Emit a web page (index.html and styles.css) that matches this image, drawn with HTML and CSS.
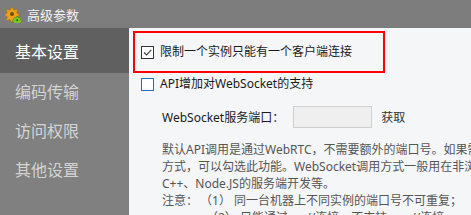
FILE: index.html
```html
<!DOCTYPE html>
<html lang="zh-CN">
<head>
    <meta charset="UTF-8">
    <title>高级参数</title>
    <link rel="stylesheet" href="styles.css">
</head>
<body>
    <div class="window">
        <header class="titlebar">
            <svg class="gear" width="16" height="16" viewBox="0 0 16 16">
                <g fill="#e8a21c" stroke="#b06a08" stroke-width="0.6">
                    <path d="M6 0.8h2l0.4 1.8 1.3 0.6 1.6-1 1.4 1.4-1 1.6 0.6 1.3 1.8 0.4v2l-1.8 0.4-0.6 1.3 1 1.6-1.4 1.4-1.6-1-1.3 0.6-0.4 1.8h-2l-0.4-1.8-1.3-0.6-1.6 1-1.4-1.4 1-1.6-0.6-1.3-1.8-0.4v-2l1.8-0.4 0.6-1.3-1-1.6 1.4-1.4 1.6 1 1.3-0.6z"/>
                </g>
                <circle cx="7" cy="7" r="2" fill="#7a4a06"/>
                <g fill="#7cc62a" stroke="#3f7a10" stroke-width="0.5">
                    <path d="M11.5 9.5h1.4l0.3 1 0.8 0.4 0.9-0.5 1 1-0.5 0.9 0.4 0.8 1 0.3v1.4l-1 0.3-0.4 0.8 0.5 0.9-1 1-0.9-0.5-0.8 0.4-0.3 1h-1.4l-0.3-1-0.8-0.4-0.9 0.5-1-1 0.5-0.9-0.4-0.8-1-0.3v-1.4l1-0.3 0.4-0.8-0.5-0.9 1-1 0.9 0.5 0.8-0.4z"/>
                </g>
                <circle cx="12.2" cy="13.2" r="1" fill="#2f5e0a"/>
            </svg>
            <span class="title">高级参数</span>
        </header>
        <div class="body">
            <nav class="sidebar">
                <div class="nav-item active">基本设置</div>
                <div class="nav-item">编码传输</div>
                <div class="nav-item">访问权限</div>
                <div class="nav-item">其他设置</div>
            </nav>
            <main class="content">
                <div class="highlight">
                    <label class="option">
                        <span class="box checked">
                            <svg width="11" height="11" viewBox="0 0 11 11"><path d="M2 5.5l2.5 2.5 4.8-5.2" fill="none" stroke="#444" stroke-width="1.2"/></svg>
                        </span>
                        限制一个实例只能有一个客户端连接
                    </label>
                </div>
                <label class="option second">
                    <span class="box focus"></span>
                    API增加对WebSocket的支持
                </label>
                <div class="port-row">
                    <span>WebSocket服务端口：</span>
                    <span class="port-input"></span>
                    <span class="fetch">获取</span>
                </div>
                <div class="note">
                    <p>默认API调用是通过WebRTC，不需要额外的端口号。如果需要使用WebSocket调用</p>
                    <p>方式，可以勾选此功能。WebSocket调用方式一般用在非浏览器环境，例如</p>
                    <p>C++、Node.JS的服务端开发等。</p>
                    <p>注意：<span class="num">（1）</span>同一台机器上不同实例的端口号不可重复；</p>
                    <p class="indent"><span class="num">（2）</span>只能通过ws://连接，不支持wss://连接。</p>
                </div>
            </main>
        </div>
    </div>
</body>
</html>
```

FILE: styles.css
```css
body {
    margin: 0;
    font-family: "Noto Sans", "Noto Sans CJK SC", sans-serif;
    background: #f5f6f8;
}
.window {
    width: 471px;
    height: 215px;
    overflow: hidden;
    display: flex;
    flex-direction: column;
}
.titlebar {
    height: 28px;
    background: #7d7d7d;
    display: flex;
    align-items: center;
    padding-left: 5px;
    box-sizing: border-box;
    flex-shrink: 0;
}
.titlebar .gear {
    margin-top: 1px;
}
.titlebar .title {
    color: #f2f2f2;
    font-size: 13px;
    margin-left: 6px;
}
.body {
    flex: 1;
    display: flex;
    min-height: 0;
}
.sidebar {
    width: 129px;
    background: #808080;
    flex-shrink: 0;
}
.nav-item {
    height: 39px;
    padding-bottom: 3px;
    box-sizing: border-box;
    display: flex;
    align-items: center;
    padding-left: 15px;
    font-size: 16px;
    color: #d4d4d4;
    font-family: "Noto Sans CJK SC", sans-serif;
}
.nav-item.active {
    height: 45px;
    padding-bottom: 0;
    background: #606060;
    color: #ffffff;
}
.content {
    flex: 1;
    padding: 3px 0 0 4px;
    white-space: nowrap;
    overflow: hidden;
    font-size: 12px;
    color: #1a1a1a;
}
.highlight {
    width: 252px;
    height: 42px;
    border: 2px solid #ff0000;
    box-sizing: border-box;
    display: flex;
    align-items: center;
    padding-left: 6px;
}
.option {
    display: flex;
    align-items: center;
    gap: 6px;
    line-height: 18px;
}
.option.second {
    margin: 2px 0 0 8px;
}
.box {
    width: 13px;
    height: 13px;
    box-sizing: border-box;
    border: 1px solid #333;
    background: #fff;
    display: flex;
    align-items: center;
    justify-content: center;
}
.box.focus {
    border-color: #1e6fc9;
}
.port-row {
    display: flex;
    align-items: center;
    margin: 13px 0 0 29px;
    height: 22px;
}
.port-input {
    width: 79px;
    height: 22px;
    box-sizing: border-box;
    border: 1px solid #cfcfcf;
    background: #efefef;
    margin-left: 9px;
}
.fetch {
    margin-left: 9px;
    color: #333;
}
.note {
    margin: 13px 0 0 29px;
    color: #555;
}
.note p {
    margin: 0;
    line-height: 17px;
}
.note .num {
    margin: 0 3px 0 8px;
}
.note .indent {
    padding-left: 36px;
}
```
